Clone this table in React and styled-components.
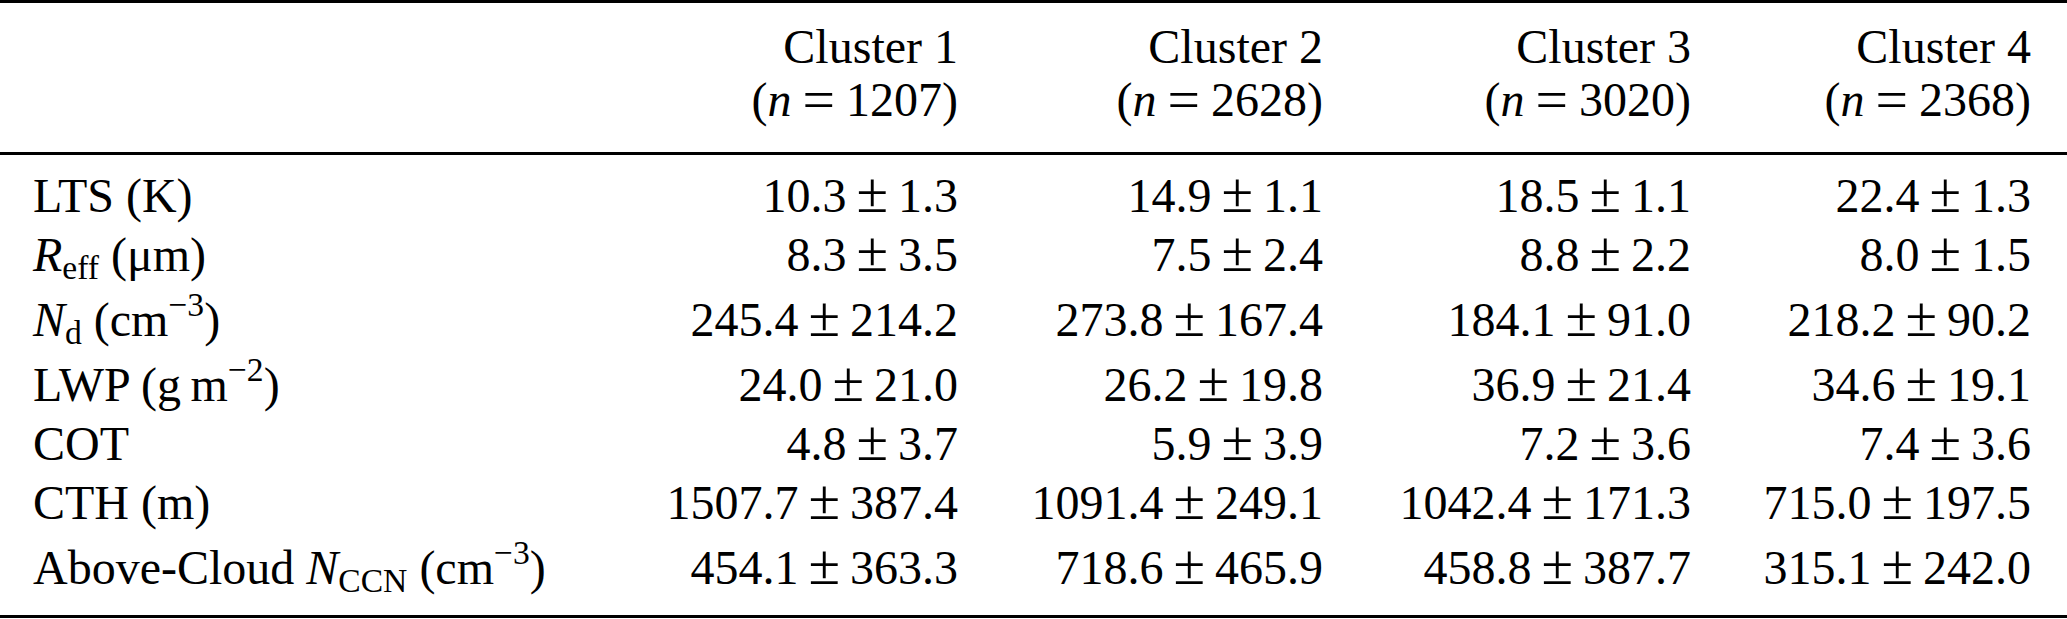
import React from "react";
import styled, { createGlobalStyle } from "styled-components";

const GlobalStyle = createGlobalStyle`
  html, body {
    margin: 0;
    padding: 0;
    background: #fff;
  }
`;

const Table = styled.table`
  width: 2067px;
  table-layout: fixed;
  border-collapse: collapse;
  border-top: 3px solid #000;
  border-bottom: 3px solid #000;
  font-family: "Liberation Serif", "Times New Roman", serif;
  font-size: 48px;
  color: #000;
`;

const Col = styled.col`
  width: ${(p) => p.$w}px;
`;

const HeadCell = styled.th`
  font-weight: normal;
  text-align: ${(p) => (p.$label ? "left" : "right")};
  line-height: 53px;
  vertical-align: top;
  padding: 17px ${(p) => (p.$end ? 36 : 0)}px 26px ${(p) => (p.$label ? 33 : 0)}px;
  border-bottom: 3px solid #000;
  white-space: nowrap;
`;

const HeadLine = styled.div`
  display: block;
`;

const Body = styled.tbody`
  tr:first-child td {
    padding-top: 11px;
  }
  tr:last-child td {
    padding-bottom: 18px;
  }
`;

const Cell = styled.td`
  line-height: 59px;
  white-space: nowrap;
  vertical-align: baseline;
  text-align: ${(p) => (p.$label ? "left" : "right")};
  padding: ${(p) => (p.$tall ? 6 : 0)}px ${(p) => (p.$end ? 36 : 0)}px 0
    ${(p) => (p.$label ? 33 : 0)}px;
`;

const I = styled.i`
  font-style: italic;
`;

const Sub = styled.span`
  font-size: 0.7em;
  line-height: 0;
  vertical-align: -0.24em;
`;

const Sup = styled.span`
  font-size: 0.7em;
  line-height: 0;
  vertical-align: 0.6em;
`;

// math-style operator: a touch larger than the text glyph
const Op = styled.span`
  display: inline-block;
  font-size: 1.2em;
  line-height: 0;
  margin: 0 ${(p) => p.$gap}px;
  vertical-align: ${(p) => p.$shift || 0}em;
`;

const columns = [
  { name: "Cluster 1", n: "1207" },
  { name: "Cluster 2", n: "2628" },
  { name: "Cluster 3", n: "3020" },
  { name: "Cluster 4", n: "2368" },
];

const rows = [
  {
    label: <>LTS (K)</>,
    vals: [["10.3", "1.3"], ["14.9", "1.1"], ["18.5", "1.1"], ["22.4", "1.3"]],
  },
  {
    label: (
      <>
        <I>R</I>
        <Sub>eff</Sub> (μm)
      </>
    ),
    vals: [["8.3", "3.5"], ["7.5", "2.4"], ["8.8", "2.2"], ["8.0", "1.5"]],
  },
  {
    tall: true,
    label: (
      <>
        <I>N</I>
        <Sub>d</Sub> (cm<Sup>−3</Sup>)
      </>
    ),
    vals: [["245.4", "214.2"], ["273.8", "167.4"], ["184.1", "91.0"], ["218.2", "90.2"]],
  },
  {
    tall: true,
    label: (
      <>
        LWP (g{"\u2009"}m<Sup>−2</Sup>)
      </>
    ),
    vals: [["24.0", "21.0"], ["26.2", "19.8"], ["36.9", "21.4"], ["34.6", "19.1"]],
  },
  {
    label: <>COT</>,
    vals: [["4.8", "3.7"], ["5.9", "3.9"], ["7.2", "3.6"], ["7.4", "3.6"]],
  },
  {
    label: <>CTH (m)</>,
    vals: [["1507.7", "387.4"], ["1091.4", "249.1"], ["1042.4", "171.3"], ["715.0", "197.5"]],
  },
  {
    tall: true,
    label: (
      <>
        Above-Cloud <I>N</I>
        <Sub>CCN</Sub> (cm<Sup>−3</Sup>)
      </>
    ),
    vals: [["454.1", "363.3"], ["718.6", "465.9"], ["458.8", "387.7"], ["315.1", "242.0"]],
  },
];

const widths = [633, 325, 365, 368, 376];

export default function App() {
  return (
    <>
      <GlobalStyle />
      <Table>
        <colgroup>
          {widths.map((w, i) => (
            <Col key={i} $w={w} />
          ))}
        </colgroup>
        <thead>
          <tr>
            <HeadCell $label />
            {columns.map((c, i) => (
              <HeadCell key={c.name} $end={i === columns.length - 1}>
                <HeadLine>{c.name}</HeadLine>
                <HeadLine>
                  (<I>n</I>
                  <Op $gap={11} $shift={-0.05}>=</Op>
                  {c.n})
                </HeadLine>
              </HeadCell>
            ))}
          </tr>
        </thead>
        <Body>
          {rows.map((r, ri) => (
            <tr key={ri}>
              <Cell $label $tall={r.tall}>
                {r.label}
              </Cell>
              {r.vals.map(([m, s], ci) => (
                <Cell key={ci} $tall={r.tall} $end={ci === r.vals.length - 1}>
                  {m}
                  <Op $gap={10}>±</Op>
                  {s}
                </Cell>
              ))}
            </tr>
          ))}
        </Body>
      </Table>
    </>
  );
}
